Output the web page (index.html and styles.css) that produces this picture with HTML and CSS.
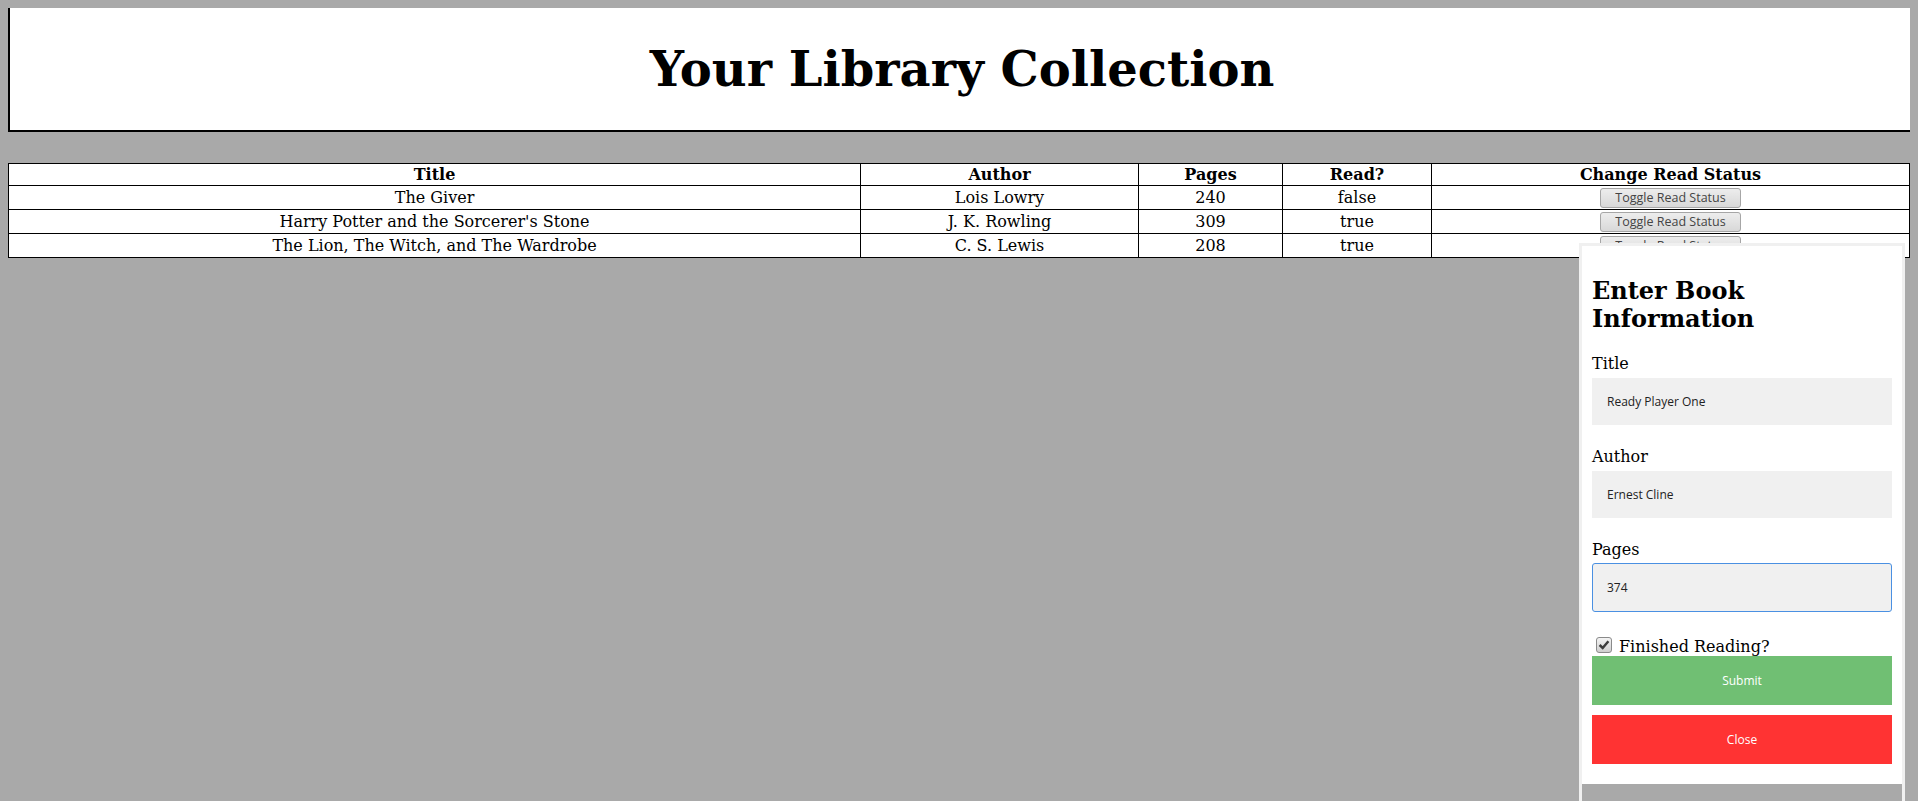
FILE: index.html
```html
<!DOCTYPE html>
<html>
<head>
<meta charset="utf-8">
<title>Library</title>
<link rel="stylesheet" href="styles.css">
</head>
<body>
<div class="header">
  <h1 class="page-title">Your Library Collection</h1>
</div>
<table class="books">
  <thead>
    <tr>
      <th class="c-title">Title</th>
      <th class="c-author">Author</th>
      <th class="c-pages">Pages</th>
      <th class="c-read">Read?</th>
      <th class="c-change">Change Read Status</th>
    </tr>
  </thead>
  <tbody>
    <tr>
      <td>The Giver</td>
      <td>Lois Lowry</td>
      <td>240</td>
      <td>false</td>
      <td><button class="toggle">Toggle Read Status</button></td>
    </tr>
    <tr>
      <td>Harry Potter and the Sorcerer's Stone</td>
      <td>J. K. Rowling</td>
      <td>309</td>
      <td>true</td>
      <td><button class="toggle">Toggle Read Status</button></td>
    </tr>
    <tr>
      <td>The Lion, The Witch, and The Wardrobe</td>
      <td>C. S. Lewis</td>
      <td>208</td>
      <td>true</td>
      <td><button class="toggle">Toggle Read Status</button></td>
    </tr>
  </tbody>
</table>

<div class="panel">
  <form class="book-form">
    <h2 class="form-title">Enter Book Information</h2>
    <label class="field-label">Title</label>
    <input class="field" type="text" value="Ready Player One">
    <label class="field-label">Author</label>
    <input class="field" type="text" value="Ernest Cline">
    <label class="field-label">Pages</label>
    <input class="field focused" type="text" value="374">
    <div class="check-row">
      <span class="checkbox"><svg width="12" height="12" viewBox="0 0 12 12"><path d="M1.6 6 L4.7 9 L10.4 2.3" fill="none" stroke="#3c3c3c" stroke-width="2.5"/></svg></span>
      <span class="check-label">Finished Reading?</span>
    </div>
    <button type="button" class="btn btn-submit">Submit</button>
    <button type="button" class="btn btn-close">Close</button>
  </form>
</div>
</body>
</html>
```

FILE: styles.css
```css
body {
  margin: 8px;
  background: #a9a9a9;
  font-family: "DejaVu Serif", serif;
  font-size: 16px;
  color: #000;
}
.header {
  box-sizing: border-box;
  width: calc(100% + 6px);
  margin-top: -2px;
  border: 2px solid #000;
  background: #fff;
}
.page-title {
  margin: 33px 0 32px;
  font-size: 48px;
  font-weight: bold;
  text-align: center;
  line-height: 57px;
}
.books {
  margin-top: 31px;
  width: 100%;
  border-collapse: collapse;
  table-layout: fixed;
  background: #fff;
}
.books th,
.books td {
  border: 1px solid #000;
  padding: 1px;
  text-align: center;
  font-size: 16px;
  line-height: 19px;
}
.books td {
  height: 21px;
  padding: 1px;
}
.c-title { width: 849px; }
.c-author { width: 275px; }
.c-pages { width: 141px; }
.c-read { width: 146px; }
.toggle {
  width: 141px;
  height: 20px;
  padding: 0;
  font-family: "Open Sans", sans-serif;
  font-size: 12.5px;
  color: #444;
  background: linear-gradient(#ededed, #d8d8d8);
  border: 1px solid #a6a6a6;
  border-radius: 3px;
  vertical-align: middle;
}
.panel {
  position: absolute;
  top: 243px;
  left: 1579px;
  width: 320px;
  border: 3px solid #f0f0f0;
  border-bottom: none;
  padding-bottom: 17px;
}
.book-form {
  background: #fff;
  padding: 10px;
  display: flex;
  flex-direction: column;
}
.form-title {
  margin: 21px 0 21px;
  font-size: 24px;
  line-height: 28px;
  font-weight: bold;
}
.field-label {
  display: block;
  font-size: 16px;
  line-height: 19px;
  margin-bottom: 5px;
}
.field {
  box-sizing: border-box;
  width: 300px;
  height: 47px;
  margin: 0 0 22px;
  padding: 0 15px;
  border: none;
  background: #f0f0f0;
  font-family: "Open Sans", sans-serif;
  font-size: 12px;
  color: #222;
  outline: none;
}
.field.focused {
  margin-top: -1px;
  height: 49px;
  border: 1px solid #4a90e2;
  border-radius: 3px;
  padding-left: 14px;
}
.check-row {
  display: flex;
  align-items: center;
  height: 19px;
  margin-top: 1px;
  margin-bottom: 2px;
}
.checkbox {
  box-sizing: border-box;
  width: 16px;
  height: 16px;
  margin: 0 7px 0 4px;
  border: 1px solid #8a8a8a;
  border-radius: 3px;
  background: linear-gradient(#f4f4f4, #cfcfcf);
  display: flex;
  align-items: center;
  justify-content: center;
}
.check-label {
  font-size: 16px;
  line-height: 19px;
  position: relative;
  top: 2px;
}
.btn {
  width: 300px;
  height: 49px;
  border: none;
  font-family: "Open Sans", sans-serif;
  font-size: 12px;
  color: #fff;
}
.btn-submit {
  background: #70bf73;
  margin-bottom: 10px;
}
.btn-close {
  background: #ff3333;
  margin-bottom: 10px;
}
```
